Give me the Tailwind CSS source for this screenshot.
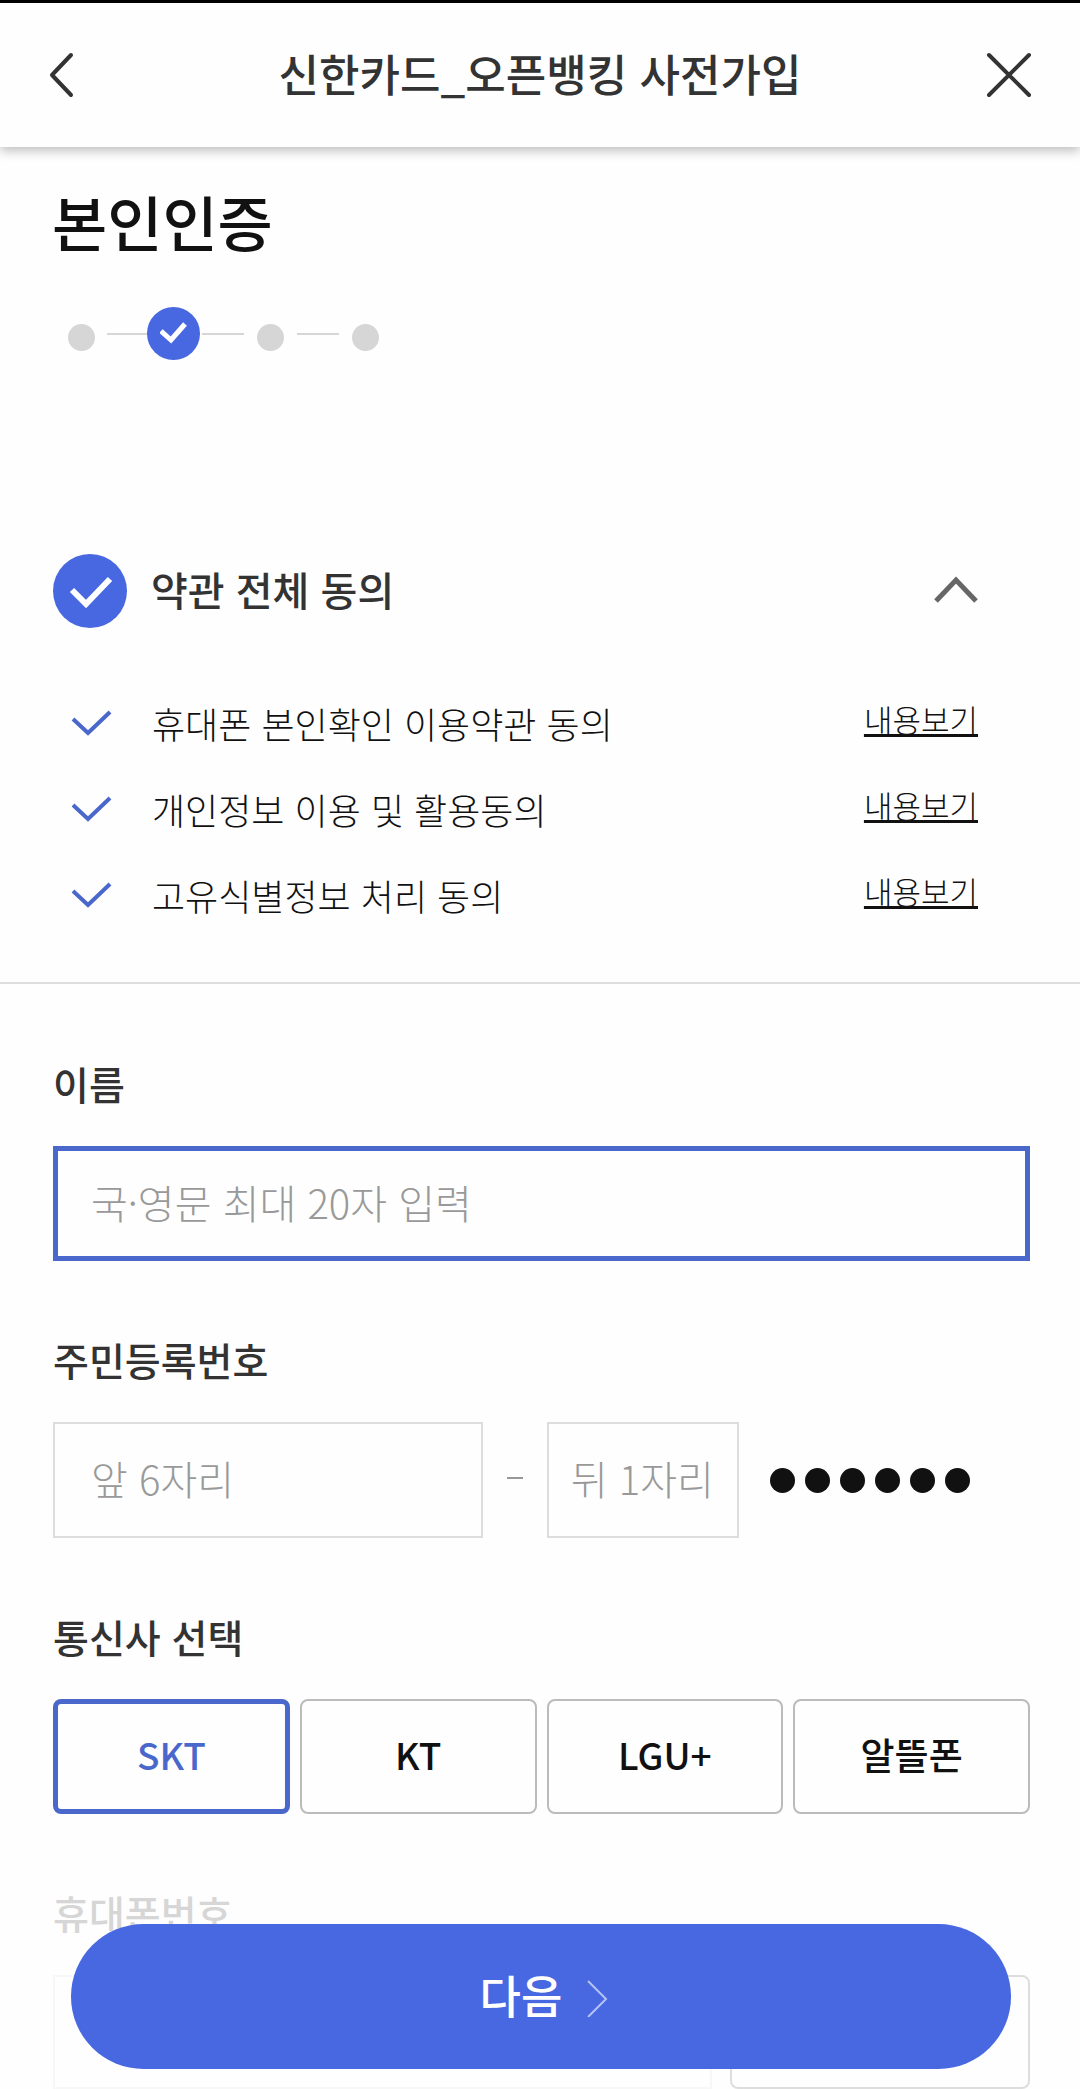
<!DOCTYPE html>
<html lang="ko">
<head>
    <meta charset="UTF-8">
    <meta name="viewport" content="width=device-width, initial-scale=1.0">
    <title>신한카드_오픈뱅킹 사전가입</title>
    <script src="https://cdn.jsdelivr.net/npm/@tailwindcss/browser@4"></script>
</head>
<body class="bg-[#fefefe] text-[#111] font-['Noto_Sans_CJK_KR',sans-serif]">
    <!-- Header -->
    <header class="sticky top-0 z-10 flex h-[147px] items-center justify-between border-t-3 border-black bg-[#fefefe] px-12 shadow-[0_4px_10px_rgba(0,0,0,0.25)]">
        <button type="button" aria-label="뒤로" class="w-12">
            <svg class="h-12 w-7" viewBox="0 0 28 48" fill="none" stroke="#333" stroke-width="4" stroke-linecap="round" stroke-linejoin="round"><path d="M23 4 4 24l19 20"/></svg>
        </button>
        <h1 class="pb-1 text-[44px] leading-[60px] font-medium text-[#333]">신한카드_오픈뱅킹 사전가입</h1>
        <button type="button" aria-label="닫기" class="w-12">
            <svg class="size-12" viewBox="0 0 48 48" fill="none" stroke="#333" stroke-width="4" stroke-linecap="round"><path d="M5 4l40 40M45 4 5 44"/></svg>
        </button>
    </header>

    <main>
        <section class="px-[52px] pt-[34px]">
            <h2 class="text-[60px] leading-[80px] font-medium">본인인증</h2>

            <!-- Steps -->
            <ol class="mt-[46px] flex h-[53px] items-center pl-4">
                <li class="mt-2 size-[27px] rounded-full bg-[#d6d6d6]"></li>
                <li class="ml-3 h-[2px] w-10 bg-[#d6d6d6]"></li>
                <li class="flex size-[53px] items-center justify-center rounded-full bg-[#4768e0]">
                    <svg class="size-7" viewBox="0 0 28 28" fill="none" stroke="#fff" stroke-width="5"><path d="M1 11l10 9L25 4"/></svg>
                </li>
                <li class="ml-[2px] h-[2px] w-[42px] bg-[#d6d6d6]"></li>
                <li class="mt-2 ml-[13px] size-[27px] rounded-full bg-[#d6d6d6]"></li>
                <li class="ml-[13px] h-[2px] w-[42px] bg-[#d6d6d6]"></li>
                <li class="mt-2 ml-[13px] size-[27px] rounded-full bg-[#d6d6d6]"></li>
            </ol>
        </section>

        <!-- Terms -->
        <section class="mt-[194px] border-b-2 border-[#ddd] pr-[102px] pb-[42px] pl-[53px]">
            <div class="flex items-center justify-between">
                <label class="flex items-center">
                    <span class="grid size-[74px]">
                        <input type="checkbox" checked class="col-start-1 row-start-1 size-full appearance-none rounded-full bg-[#bbb] checked:bg-[#4768e0]">
                        <svg class="pointer-events-none z-1 col-start-1 row-start-1 size-full" viewBox="0 0 74 74" fill="none" stroke="#fff" stroke-width="6"><path d="M19 36l14 14 24-25"/></svg>
                    </span>
                    <span class="ml-6 pb-1 text-[40px] leading-[60px] font-medium text-[#333]">약관 전체 동의</span>
                </label>
                <button type="button" aria-label="약관 접기" class="pb-1">
                    <svg class="h-7 w-11" viewBox="0 0 44 28" fill="none" stroke="#666" stroke-width="5"><path d="M2 26 22 5l20 21"/></svg>
                </button>
            </div>

            <ul class="mt-[54px]">
                <li class="flex h-[86px] items-center justify-between">
                    <label class="flex items-center">
                        <span class="ml-4 grid h-8 w-11">
                            <input type="checkbox" checked class="col-start-1 row-start-1 size-full appearance-none">
                            <svg class="pointer-events-none col-start-1 row-start-1 size-full" viewBox="0 0 44 32" fill="none" stroke="#4a68cc" stroke-width="4"><path d="M4 10l15 14L41 3"/></svg>
                        </span>
                        <span class="ml-[39px] pb-1 text-[36px] leading-[56px] font-light">휴대폰 본인확인 이용약관 동의</span>
                    </label>
                    <a href="#" class="pb-3 text-[31px] leading-[46px] font-light underline decoration-3 underline-offset-2 [text-decoration-skip-ink:none]">내용보기</a>
                </li>
                <li class="flex h-[86px] items-center justify-between">
                    <label class="flex items-center">
                        <span class="ml-4 grid h-8 w-11">
                            <input type="checkbox" checked class="col-start-1 row-start-1 size-full appearance-none">
                            <svg class="pointer-events-none col-start-1 row-start-1 size-full" viewBox="0 0 44 32" fill="none" stroke="#4a68cc" stroke-width="4"><path d="M4 10l15 14L41 3"/></svg>
                        </span>
                        <span class="ml-[39px] pb-1 text-[36px] leading-[56px] font-light">개인정보 이용 및 활용동의</span>
                    </label>
                    <a href="#" class="pb-3 text-[31px] leading-[46px] font-light underline decoration-3 underline-offset-2 [text-decoration-skip-ink:none]">내용보기</a>
                </li>
                <li class="flex h-[86px] items-center justify-between">
                    <label class="flex items-center">
                        <span class="ml-4 grid h-8 w-11">
                            <input type="checkbox" checked class="col-start-1 row-start-1 size-full appearance-none">
                            <svg class="pointer-events-none col-start-1 row-start-1 size-full" viewBox="0 0 44 32" fill="none" stroke="#4a68cc" stroke-width="4"><path d="M4 10l15 14L41 3"/></svg>
                        </span>
                        <span class="ml-[39px] pb-1 text-[36px] leading-[56px] font-light">고유식별정보 처리 동의</span>
                    </label>
                    <a href="#" class="pb-3 text-[31px] leading-[46px] font-light underline decoration-3 underline-offset-2 [text-decoration-skip-ink:none]">내용보기</a>
                </li>
            </ul>
        </section>

        <!-- Form -->
        <form class="flex flex-col gap-[68px] pt-[69px] pr-[50px] pl-[53px]">
            <div>
                <label for="name" class="block text-[39px] leading-[60px] font-medium text-[#333]">이름</label>
                <input id="name" type="text" placeholder="국·영문 최대 20자 입력" class="mt-[33px] block h-[115px] w-full border-5 border-[#4a68cc] px-[33px] pb-1 text-[40px] font-light outline-none placeholder:text-[#999]">
            </div>

            <div>
                <label for="jumin1" class="block text-[39px] leading-[60px] font-medium text-[#333]">주민등록번호</label>
                <div class="mt-[33px] flex items-center">
                    <input id="jumin1" type="text" placeholder="앞 6자리" class="h-[116px] w-[44%] border-2 border-[#ddd] px-9 pb-1 text-[40px] font-light outline-none placeholder:text-[#999]">
                    <span class="mx-6 mb-1 h-[2px] w-4 bg-[#999]"></span>
                    <input type="text" aria-label="뒤 1자리" placeholder="뒤 1자리" class="h-[116px] w-[192px] border-2 border-[#ddd] px-[22px] pb-1 text-[40px] font-light outline-none placeholder:text-[#999]">
                    <div class="ml-[31px] flex gap-[10px]">
                        <span class="size-[25px] rounded-full bg-[#111]"></span>
                        <span class="size-[25px] rounded-full bg-[#111]"></span>
                        <span class="size-[25px] rounded-full bg-[#111]"></span>
                        <span class="size-[25px] rounded-full bg-[#111]"></span>
                        <span class="size-[25px] rounded-full bg-[#111]"></span>
                        <span class="size-[25px] rounded-full bg-[#111]"></span>
                    </div>
                </div>
            </div>

            <fieldset>
                <legend class="block text-[39px] leading-[60px] font-medium text-[#333]">통신사 선택</legend>
                <div class="mt-[33px] grid grid-cols-4 gap-[10px] text-[37px] font-medium">
                    <label class="flex h-[115px] items-center justify-center rounded-lg border-2 border-[#bbb] pb-1 has-checked:border-5 has-checked:border-[#4a68cc] has-checked:text-[#4a68cc]"><input type="radio" name="telecom" checked class="sr-only">SKT</label>
                    <label class="flex h-[115px] items-center justify-center rounded-lg border-2 border-[#bbb] pb-1 has-checked:border-5 has-checked:border-[#4a68cc] has-checked:text-[#4a68cc]"><input type="radio" name="telecom" class="sr-only">KT</label>
                    <label class="flex h-[115px] items-center justify-center rounded-lg border-2 border-[#bbb] pb-1 has-checked:border-5 has-checked:border-[#4a68cc] has-checked:text-[#4a68cc]"><input type="radio" name="telecom" class="sr-only">LGU+</label>
                    <label class="flex h-[115px] items-center justify-center rounded-lg border-2 border-[#bbb] pb-1 has-checked:border-5 has-checked:border-[#4a68cc] has-checked:text-[#4a68cc]"><input type="radio" name="telecom" class="sr-only">알뜰폰</label>
                </div>
            </fieldset>

            <div>
                <label for="phone" class="block text-[39px] leading-[60px] font-medium text-[#d6d6d6]">휴대폰번호</label>
                <div class="mt-[33px] flex gap-[18px]">
                    <input id="phone" type="tel" disabled class="h-[114px] min-w-0 flex-1 border-2 border-[#f7f7f7]">
                    <button type="button" disabled aria-label="인증요청" class="h-[114px] w-[300px] rounded-lg border-2 border-[#ddd]"></button>
                </div>
            </div>
        </form>
    </main>

    <!-- Bottom button -->
    <div class="fixed inset-x-0 bottom-5 z-10 pr-[69px] pl-[71px]">
        <button type="button" class="flex h-[145px] w-full items-center justify-center gap-6 rounded-full bg-[#4768e0] pl-2 text-[45px] font-medium text-white">
            <span class="pb-1">다음</span>
            <svg class="h-10 w-6" viewBox="0 0 24 40" fill="none" stroke="#fff" stroke-opacity=".6" stroke-width="2"><path d="M2 4l18 18L2 40"/></svg>
        </button>
    </div>
</body>
</html>
